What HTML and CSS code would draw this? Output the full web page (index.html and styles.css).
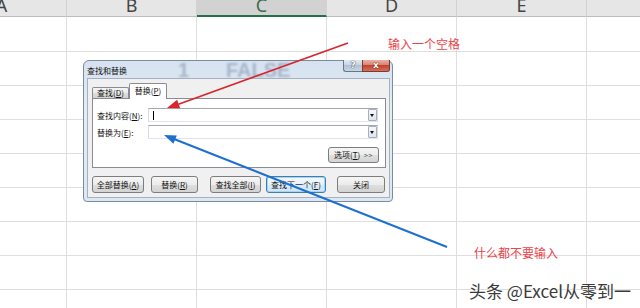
FILE: index.html
```html
<!DOCTYPE html>
<html lang="zh-CN">
<head>
<meta charset="utf-8">
<title>查找和替换</title>
<link rel="stylesheet" href="styles.css">
</head>
<body>
<div class="viewport">
<div class="sheet">
  <div class="hdr">
    <div class="hc">A</div><div class="hc">B</div><div class="hc sel">C</div><div class="hc">D</div><div class="hc">E</div><div class="hc"></div>
  </div>
  <div class="row r1"><div class="cell"></div><div class="cell"></div><div class="cell"></div><div class="cell"></div><div class="cell"></div><div class="cell"></div></div>
  <div class="row"><div class="cell"></div><div class="cell"></div><div class="cell"></div><div class="cell"></div><div class="cell"></div><div class="cell"></div></div>
  <div class="row"><div class="cell"></div><div class="cell"></div><div class="cell"></div><div class="cell"></div><div class="cell"></div><div class="cell"></div></div>
  <div class="row"><div class="cell"></div><div class="cell"></div><div class="cell"></div><div class="cell"></div><div class="cell"></div><div class="cell"></div></div>
  <div class="row"><div class="cell"></div><div class="cell"></div><div class="cell"></div><div class="cell"></div><div class="cell"></div><div class="cell"></div></div>
  <div class="row"><div class="cell"></div><div class="cell"></div><div class="cell"></div><div class="cell"></div><div class="cell"></div><div class="cell"></div></div>
  <div class="row"><div class="cell"></div><div class="cell"></div><div class="cell"></div><div class="cell"></div><div class="cell"></div><div class="cell"></div></div>
  <div class="row"><div class="cell"></div><div class="cell"></div><div class="cell"></div><div class="cell"></div><div class="cell"></div><div class="cell"></div></div>
  <div class="row"><div class="cell"></div><div class="cell"></div><div class="cell"></div><div class="cell"></div><div class="cell"></div><div class="cell"></div></div>
</div>
</div>

<div class="dlg">
  <div class="titlebar">
    <span class="glass g1">1</span><span class="glass g2">FALSE</span>
    <span class="ttl">查找和替换</span>
    <div class="caps"><span class="cap help">?</span><span class="cap close">x</span></div>
  </div>
  <div class="client">
    <div class="tabs">
      <span class="tab">查找(<u>D</u>)</span><span class="tab act">替换(<u>P</u>)</span>
    </div>
    <div class="panel">
      <div class="frow"><span class="lbl">查找内容(<u>N</u>):</span><div class="combo"><span class="caret"></span><span class="drop"></span></div></div>
      <div class="frow"><span class="lbl">替换为(<u>E</u>):</span><div class="combo"><span class="drop"></span></div></div>
      <div class="optrow"><span class="btn opt">选项(<u>T</u>) <span class="gt">&gt;&gt;</span></span></div>
    </div>
    <div class="btns">
      <span class="btn b1">全部替换(<u>A</u>)</span>
      <span class="btn b2">替换(<u>R</u>)</span>
      <span class="btn b3">查找全部(<u>I</u>)</span>
      <span class="btn b4 focus">查找下一个(<u>F</u>)</span>
      <span class="btn b5">关闭</span>
    </div>
  </div>
</div>

<svg class="arrows" width="640" height="308" viewBox="0 0 640 308">
  <line x1="348" y1="43" x2="178.5" y2="104.2" stroke="#d8262c" stroke-width="1.7"/>
  <polygon points="167,108 180.2,108.3 177.1,99.8" fill="#d8262c"/>
  <line x1="447" y1="247" x2="174" y2="139" stroke="#1d6fd0" stroke-width="2"/>
  <polygon points="164,135 173.4,143.8 176.8,135.4" fill="#1d6fd0"/>
</svg>

<div class="note n1">输入一个空格</div>
<div class="note n2">什么都不要输入</div>
<div class="wm">头条 @Excel从零到一</div>
</body>
</html>
```

FILE: styles.css
```css
* { box-sizing: border-box; }

body {
  margin: 0;
  width: 640px;
  height: 308px;
  overflow: hidden;
  position: relative;
  background: #fff;
  font-family: "Noto Sans CJK SC", "Noto Sans", sans-serif;
}

/* spreadsheet */
.viewport {
  width: 640px;
  height: 308px;
  overflow: hidden;
}

.sheet { margin-left: -63px; }

.hdr { display: flex; height: 17px; }

.hc {
  flex: none;
  width: 130px;
  height: 17px;
  background: #e6e6e6;
  border-right: 1px solid #d2d2d2;
  border-bottom: 1px solid #bdbdbd;
  text-align: center;
  font: 18px/10px "Noto Sans", sans-serif;
  color: #444;
}

.hc.sel {
  background: #d2d2d2;
  border-bottom: 2px solid #217346;
  color: #3f6a52;
}

.row { display: flex; height: 34px; }
.row.r1 { height: 35px; }

.cell {
  flex: none;
  width: 130px;
  border-right: 1px solid #dedede;
  border-bottom: 1px solid #dedede;
}

/* dialog */
.dlg {
  position: absolute;
  left: 83px;
  top: 60px;
  width: 310px;
  height: 142px;
  border: 1px solid #7b8ba0;
  border-radius: 6px 6px 4px 4px;
  background: linear-gradient(#d6e2f0, #e4ecf6 35%, #dde7f3);
  display: flex;
  flex-direction: column;
  font-size: 8px;
  color: #111;
}

.titlebar {
  position: relative;
  height: 17px;
  display: flex;
  align-items: flex-start;
}

.glass {
  position: absolute;
  top: -1px;
  font: bold 20px/20px "Liberation Sans", sans-serif;
  color: #8395ad;
  filter: blur(1.3px);
  opacity: 0.6;
}
.g1 { left: 94px; }
.g2 { left: 142px; }

.ttl {
  position: relative;
  padding: 1px 0 0 3px;
  line-height: 17px;
  font-size: 8px;
  color: #111;
}

.caps {
  position: relative;
  display: flex;
  margin-left: auto;
  margin-right: 2px;
  margin-top: -1px;
}

.cap {
  height: 12px;
  border: 1px solid #66768c;
  border-top: none;
  text-align: center;
  font: bold 9px/11px "DejaVu Sans", sans-serif;
  color: #fff;
}

.help {
  width: 19px;
  border-right: none;
  border-radius: 0 0 0 3px;
  background: linear-gradient(#e3e9f1, #c9d4e2 45%, #b2c1d4 50%, #c9d6e5);
  text-shadow: 0 0 1px #2d3a4c, 0 0 1px #2d3a4c;
}

.close {
  width: 28px;
  border-color: #7a3b33;
  border-radius: 0 0 3px 0;
  background: linear-gradient(#e8b0a4, #d88472 45%, #c3432e 50%, #d4705c);
  text-shadow: 0 0 1px #5b1d12, 0 0 1px #5b1d12;
}

.client {
  position: relative;
  margin: 0 2px 0 3px;
  height: 120px;
  border: 1px solid #a3b1c3;
  background: #f0f0f0;
  padding: 4px 0 0 3px;
}

.tabs {
  display: flex;
  align-items: flex-end;
  height: 15px;
  padding-left: 1px;
}

.tab {
  width: 37px;
  height: 11px;
  border: 1px solid #898c95;
  border-bottom: none;
  border-radius: 2px 2px 0 0;
  background: linear-gradient(#f4f4f4, #ebebeb 50%, #dedede 51%, #d2d2d2);
  text-align: center;
  line-height: 10px;
}

.tab.act {
  position: relative;
  z-index: 1;
  width: 38px;
  height: 16px;
  margin-bottom: -1px;
  background: #fff;
  line-height: 14px;
}

.panel {
  margin-left: 1px;
  width: 294px;
  height: 70px;
  border: 1px solid #898c95;
  background: #fff;
  padding: 9px 6px 0 4px;
}

.frow {
  display: flex;
  align-items: center;
  height: 14px;
}
.frow + .frow { margin-top: 3px; }

.lbl { width: 51px; white-space: nowrap; }

.combo {
  width: 230px;
  height: 14px;
  border: 1px solid;
  border-color: #a4a7ae #d6d9df #e0e3e8 #d6d9df;
  background: #fff;
  display: flex;
  align-items: center;
}

.caret {
  width: 1px;
  height: 9px;
  margin-left: 4px;
  background: #000;
}

.drop {
  position: relative;
  width: 9px;
  height: 12px;
  margin-left: auto;
  border: 1px solid #a6afbc;
  border-radius: 1px;
  background: linear-gradient(#f6f8fb, #dfe5ec);
}
.drop::after {
  content: "";
  position: absolute;
  left: 1px;
  top: 4px;
  border-left: 2.5px solid transparent;
  border-right: 2.5px solid transparent;
  border-top: 3px solid #111;
}

.optrow {
  display: flex;
  justify-content: flex-end;
  margin-top: 8px;
}

.btn {
  height: 17px;
  border: 1px solid #7d7d7d;
  border-radius: 3px;
  background: linear-gradient(#f5f5f5, #ececec 50%, #dfdfdf 51%, #d3d3d3);
  text-align: center;
  line-height: 15px;
  white-space: nowrap;
}

.opt { width: 51px; height: 16px; line-height: 14px; }
.gt { color: #555; font-size: 7px; letter-spacing: 0.5px; margin-left: 2px; }

.btns {
  display: flex;
  margin-top: 8px;
  padding-left: 1px;
}

.b1 { width: 52px; }
.b2 { width: 47px; margin-left: 7px; }
.b3 { width: 51px; margin-left: 12px; }
.b4 { width: 60px; margin-left: 5px; }
.b5 { width: 48px; margin-left: 11px; }

.btn.focus {
  border-color: #3c7fb1;
  background: linear-gradient(#f4f9fd, #e6f2fb 50%, #d8ebf9 51%, #cfe5f7);
  box-shadow: inset 0 0 0 1px #a8d3f3;
}

/* annotations */
.arrows {
  position: absolute;
  left: 0;
  top: 0;
}

.note {
  position: absolute;
  font-size: 12px;
  line-height: 14px;
  color: #e8454a;
  white-space: nowrap;
}
.n1 { left: 388px; top: 37px; }
.n2 { left: 474px; top: 246px; }

.wm {
  position: absolute;
  left: 469px;
  top: 281px;
  font-size: 17px;
  line-height: 20px;
  color: #3a3a3a;
  white-space: nowrap;
  text-shadow: 0 0 2px #fff, 0 0 1px #fff;
}
```
